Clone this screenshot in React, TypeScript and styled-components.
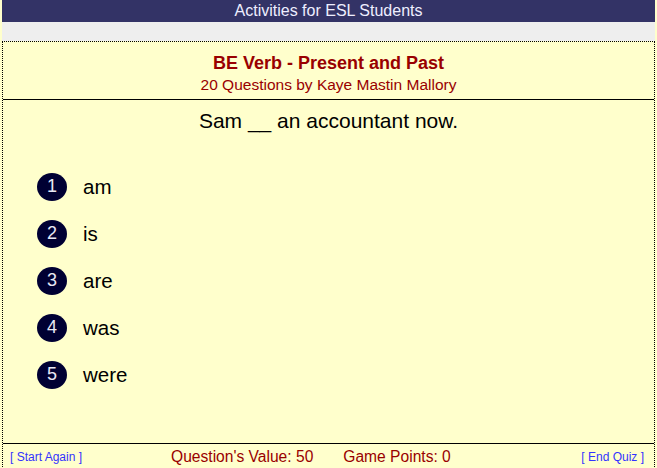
import React from "react";
import styled, { createGlobalStyle } from "styled-components";

const Global = createGlobalStyle`
  html, body { margin: 0; padding: 0; }
  body {
    background: #ffffcc;
    font-family: "Liberation Sans", Arial, sans-serif;
    overflow: hidden;
  }
`;

const Page = styled.div`
  margin: 0 2px;
  display: flex;
  flex-direction: column;
`;

const TitleBar = styled.div`
  height: 22px;
  background: #333366;
  color: #eeeeff;
  font-size: 16px;
  line-height: 22px;
  text-align: center;
`;

const GrayBar = styled.div`
  height: 19px;
  background: #eeeeee;
`;

const Board = styled.div`
  border: 1px dotted #000;
  display: flex;
  flex-direction: column;
  height: 428px;
`;

const Header = styled.div`
  padding-top: 10px;
  text-align: center;
  color: #990000;
  border-bottom: 1px solid #000;
  height: 47px;
`;

const QuizTitle = styled.div`
  font-size: 18px;
  font-weight: bold;
  line-height: 22px;
`;

const Sub = styled.div`
  font-size: 15.5px;
  line-height: 22px;
`;

const Question = styled.div`
  margin-top: 9px;
  text-align: center;
  font-size: 21px;
  line-height: 24px;
  color: #000;
`;

const Options = styled.div`
  margin-top: 30px;
  padding-left: 34px;
  display: flex;
  flex-direction: column;
  flex: 1;
`;

const Option = styled.div`
  height: 47px;
  display: flex;
  align-items: center;
  gap: 16px;
`;

const Num = styled.div`
  width: 30px;
  height: 28px;
  border-radius: 50%;
  background: #000033;
  color: #e8e8f4;
  font-size: 18px;
  display: flex;
  align-items: center;
  justify-content: center;
`;

const Answer = styled.div`
  font-size: 20.5px;
  color: #000;
`;

const Footer = styled.div`
  border-top: 1px solid #000;
  height: 26px;
  display: flex;
  align-items: center;
  padding: 0 10px 0 7px;
`;

const Link = styled.span`
  font-size: 12px;
  color: #3333ff;
`;

const Stat = styled.span<{ $ml: number }>`
  margin-left: ${(p) => p.$ml}px;
  font-size: 15.6px;
  color: #990000;
`;

const Spacer = styled.div`
  flex: 1;
`;

const answers = ["am", "is", "are", "was", "were"];

export default function App() {
  return (
    <>
      <Global />
      <Page>
        <TitleBar>Activities for ESL Students</TitleBar>
        <GrayBar />
        <Board>
          <Header>
            <QuizTitle>BE Verb - Present and Past</QuizTitle>
            <Sub>20 Questions by Kaye Mastin Mallory</Sub>
          </Header>
          <Question>Sam __ an accountant now.</Question>
          <Options>
            {answers.map((a, i) => (
              <Option key={a}>
                <Num>{i + 1}</Num>
                <Answer>{a}</Answer>
              </Option>
            ))}
          </Options>
          <Footer>
            <Link>[ Start Again ]</Link>
            <Stat $ml={89}>Question's Value: 50</Stat>
            <Stat $ml={30}>Game Points: 0</Stat>
            <Spacer />
            <Link>[ End Quiz ]</Link>
          </Footer>
        </Board>
      </Page>
    </>
  );
}
